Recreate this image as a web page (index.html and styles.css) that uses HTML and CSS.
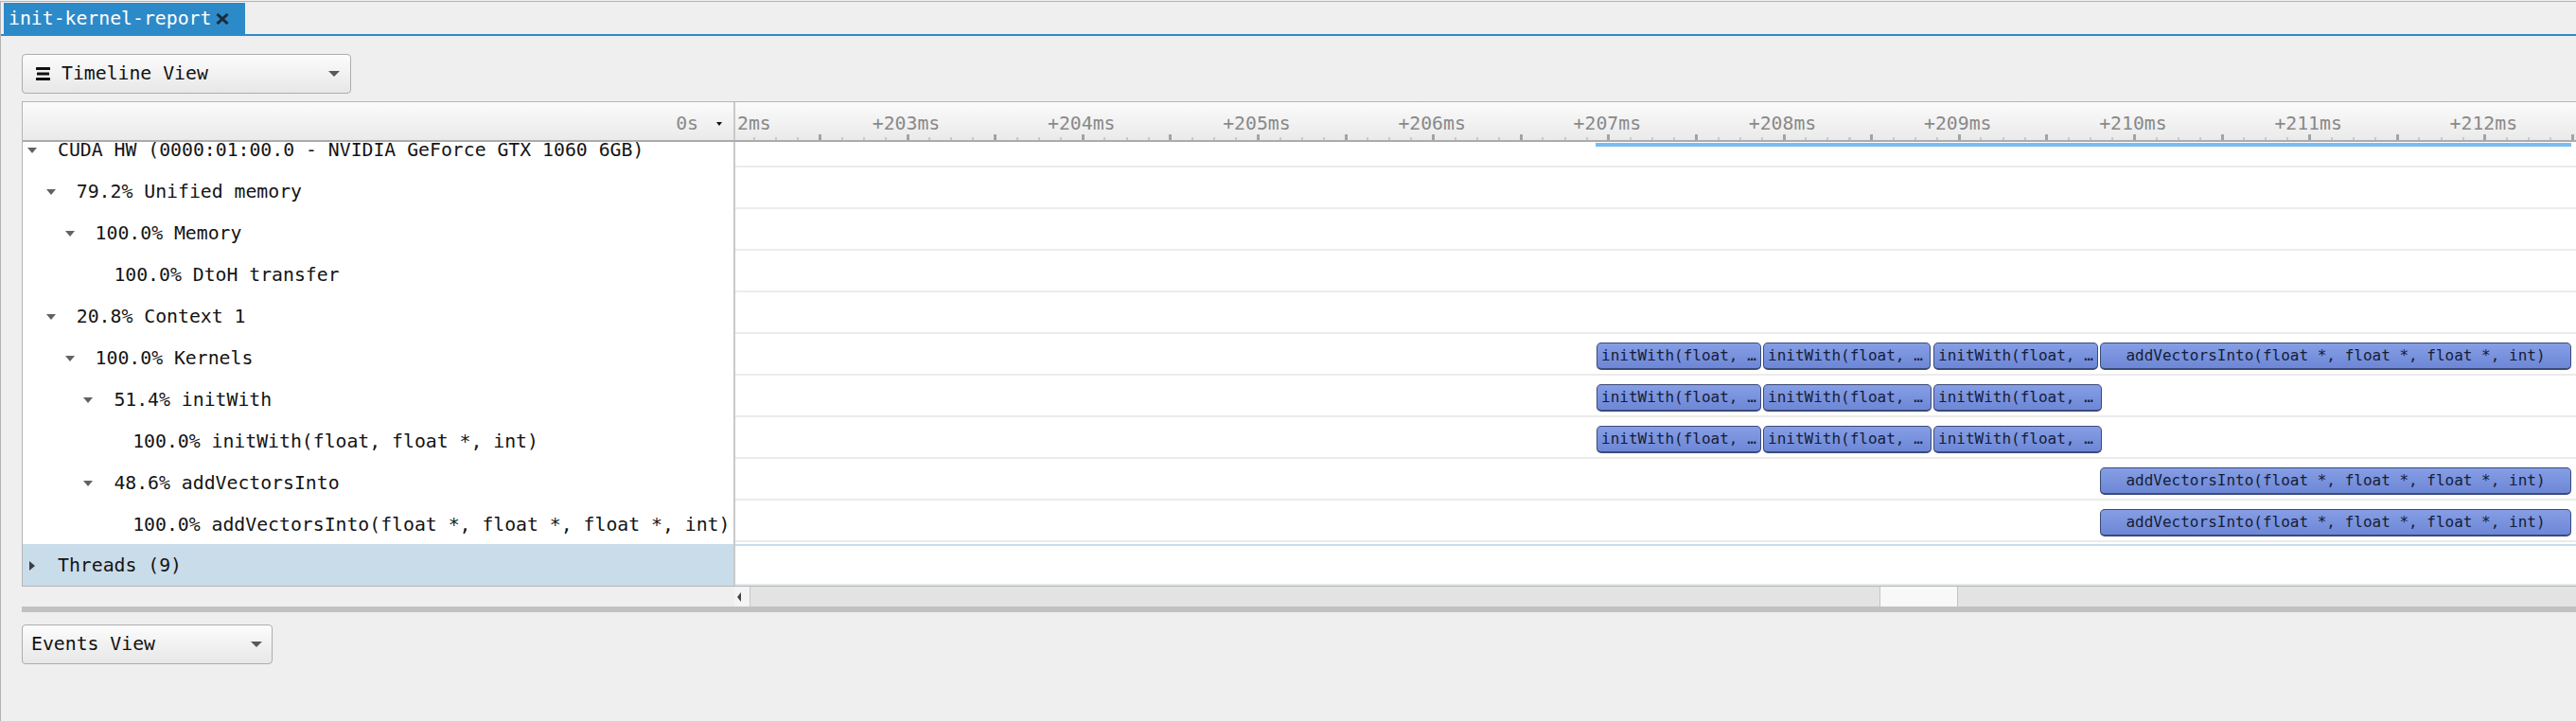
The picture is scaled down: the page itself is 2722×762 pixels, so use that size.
FILE: index.html
```html
<!DOCTYPE html>
<html>
<head>
<meta charset="utf-8">
<title>init-kernel-report</title>
<link rel="stylesheet" href="styles.css">
</head>
<body>
<div class="window">
  <div class="tabbar">
    <div class="tab">
      <span class="tab-title">init-kernel-report</span>
      <svg class="tab-close" width="14" height="12" viewBox="0 0 14 12"><path d="M1.5 1 L12.5 11 M12.5 1 L1.5 11" stroke="#1b2a39" stroke-width="3" fill="none"/></svg>
    </div>
  </div>
  <div class="content">
    <div class="combo combo-timeline">
      <svg class="combo-icon" width="15" height="14" viewBox="0 0 15 14"><rect x="0" y="0" width="15" height="3" rx="0.5" fill="#111"/><rect x="1" y="5.5" width="13" height="3" rx="0.5" fill="#111"/><rect x="0" y="11" width="15" height="3" rx="0.5" fill="#111"/></svg>
      <span class="combo-label">Timeline View</span>
      <span class="combo-arrow"></span>
    </div>

    <div class="panel">
      <div class="row header">
        <div class="tree-cell header-tree"><span class="zero">0s</span><span class="hdr-arrow"></span></div>
        <div class="tl-cell ruler">
          <span class="ticks ticks-minor"></span>
          <span class="ticks ticks-major"></span>
          <span class="tick-label" style="left:2px">2ms</span>
          <span class="tick-label" style="left:144.8px">+203ms</span>
          <span class="tick-label" style="left:330px">+204ms</span>
          <span class="tick-label" style="left:515.2px">+205ms</span>
          <span class="tick-label" style="left:700.4px">+206ms</span>
          <span class="tick-label" style="left:885.6px">+207ms</span>
          <span class="tick-label" style="left:1070.8px">+208ms</span>
          <span class="tick-label" style="left:1256px">+209ms</span>
          <span class="tick-label" style="left:1441.2px">+210ms</span>
          <span class="tick-label" style="left:1626.4px">+211ms</span>
          <span class="tick-label" style="left:1811.6px">+212ms</span>
        </div>
      </div>

      <div class="viewport">
        <div class="rows">
          <div class="row">
            <div class="tree-cell lvl0"><span class="twisty open"></span><span class="name">CUDA HW (0000:01:00.0 - NVIDIA GeForce GTX 1060 6GB)</span></div>
            <div class="tl-cell"><span class="hw-line" style="left:909px;width:1031px"></span></div>
          </div>
          <div class="row">
            <div class="tree-cell lvl1"><span class="twisty open"></span><span class="name">79.2% Unified memory</span></div>
            <div class="tl-cell"></div>
          </div>
          <div class="row">
            <div class="tree-cell lvl2"><span class="twisty open"></span><span class="name">100.0% Memory</span></div>
            <div class="tl-cell"></div>
          </div>
          <div class="row">
            <div class="tree-cell lvl3"><span class="twisty"></span><span class="name">100.0% DtoH transfer</span></div>
            <div class="tl-cell"></div>
          </div>
          <div class="row">
            <div class="tree-cell lvl1"><span class="twisty open"></span><span class="name">20.8% Context 1</span></div>
            <div class="tl-cell"></div>
          </div>
          <div class="row">
            <div class="tree-cell lvl2"><span class="twisty open"></span><span class="name">100.0% Kernels</span></div>
            <div class="tl-cell">
              <span class="bar" style="left:910px;width:174px">initWith(float, …</span>
              <span class="bar" style="left:1086px;width:177px">initWith(float, …</span>
              <span class="bar" style="left:1266px;width:174px">initWith(float, …</span>
              <span class="bar bar-center" style="left:1442px;width:498px">addVectorsInto(float *, float *, float *, int)</span>
            </div>
          </div>
          <div class="row">
            <div class="tree-cell lvl3"><span class="twisty open"></span><span class="name">51.4% initWith</span></div>
            <div class="tl-cell">
              <span class="bar" style="left:910px;width:174px">initWith(float, …</span>
              <span class="bar" style="left:1086px;width:178px">initWith(float, …</span>
              <span class="bar" style="left:1266px;width:178px">initWith(float, …</span>
            </div>
          </div>
          <div class="row">
            <div class="tree-cell lvl4"><span class="twisty"></span><span class="name">100.0% initWith(float, float *, int)</span></div>
            <div class="tl-cell">
              <span class="bar" style="left:910px;width:174px">initWith(float, …</span>
              <span class="bar" style="left:1086px;width:178px">initWith(float, …</span>
              <span class="bar" style="left:1266px;width:178px">initWith(float, …</span>
            </div>
          </div>
          <div class="row">
            <div class="tree-cell lvl3"><span class="twisty open"></span><span class="name">48.6% addVectorsInto</span></div>
            <div class="tl-cell">
              <span class="bar bar-center" style="left:1442px;width:498px">addVectorsInto(float *, float *, float *, int)</span>
            </div>
          </div>
          <div class="row">
            <div class="tree-cell lvl4"><span class="twisty"></span><span class="name">100.0% addVectorsInto(float *, float *, float *, int)</span></div>
            <div class="tl-cell">
              <span class="bar bar-center" style="left:1442px;width:498px">addVectorsInto(float *, float *, float *, int)</span>
            </div>
          </div>
        </div>
        <div class="row row-gap">
          <div class="tree-cell"></div>
          <div class="tl-cell"></div>
        </div>
        <div class="row threads">
          <div class="tree-cell lvl0"><span class="twisty closed"></span><span class="name">Threads (9)</span></div>
          <div class="tl-cell"></div>
        </div>
      </div>
    </div>

    <div class="hscroll">
      <div class="hs-spacer"></div>
      <div class="hs-btn"><span class="hs-arrow"></span></div>
      <div class="hs-track"><div class="hs-thumb"></div></div>
    </div>
    <div class="splitter"></div>

    <div class="combo combo-events">
      <span class="combo-label">Events View</span>
      <span class="combo-arrow"></span>
    </div>
  </div>
</div>
</body>
</html>
```

FILE: styles.css
```css
* { box-sizing: border-box; }
html, body { margin: 0; padding: 0; }
body {
  width: 2722px;
  height: 762px;
  overflow: hidden;
  background: #efefef;
  font-family: "DejaVu Sans Mono", "Liberation Mono", monospace;
  font-size: 19.8px;
  color: #141414;
}
.window {
  margin-top: 1px;
  height: 761px;
  border-top: 1px solid #b3b3b3;
  border-left: 1px solid #b3b3b3;
}

/* tab bar */
.tabbar {
  height: 36px;
  padding-top: 1px;
  padding-left: 3px;
  border-bottom: 2px solid #2d8ac8;
  display: flex;
}
.tab {
  width: 255px;
  height: 33px;
  background: #2d8ac8;
  color: #ffffff;
  display: flex;
  align-items: center;
  padding-left: 5px;
}
.tab-title { line-height: 24px; }
.tab-close { margin-left: 5px; margin-top: 1px; }

.content { padding-left: 22px; }

/* combo boxes */
.combo {
  display: flex;
  align-items: center;
  height: 42px;
  border: 1px solid #adadad;
  border-radius: 4px;
  background: linear-gradient(#fcfcfc, #e7e7e7);
  color: #111;
}
.combo-label { flex: 1; line-height: 24px; }
.combo-arrow {
  width: 0; height: 0;
  border-left: 6px solid transparent;
  border-right: 6px solid transparent;
  border-top: 6px solid #595959;
}
.combo-timeline {
  width: 348px;
  margin-top: 19px;
  padding: 0 11px 0 14px;
}
.combo-timeline .combo-label { margin-left: 12px; }
.combo-events {
  width: 265px;
  margin-top: 13px;
  padding: 0 10px 0 9px;
}

/* panel */
.panel {
  margin-top: 8px;
  border-top: 1px solid #b5b5b5;
  border-left: 1px solid #b5b5b5;
  border-bottom: 1px solid #b5b5b5;
  background: #ffffff;
}
.row { display: flex; height: 44px; }
.tree-cell {
  flex: 0 0 753px;
  border-right: 2px solid #c9c9c9;
  display: flex;
  align-items: center;
  padding-top: 8px;
  white-space: nowrap;
  overflow: hidden;
  background: #ffffff;
}
.tl-cell {
  flex: 1;
  position: relative;
  border-bottom: 2px solid #ebebeb;
  background: #ffffff;
}
.name { line-height: 24px; }

.lvl0 { padding-left: 5px; }
.lvl1 { padding-left: 24.8px; }
.lvl2 { padding-left: 44.6px; }
.lvl3 { padding-left: 64.4px; }
.lvl4 { padding-left: 84.2px; }

.twisty {
  flex: 0 0 10px;
  height: 10px;
  margin-right: 22px;
  display: flex;
  align-items: center;
  justify-content: center;
}
.twisty.open::before {
  content: "";
  width: 0; height: 0;
  border-left: 5px solid transparent;
  border-right: 5px solid transparent;
  border-top: 6px solid #626262;
}
.twisty.closed::before {
  content: "";
  width: 0; height: 0;
  border-top: 5px solid transparent;
  border-bottom: 5px solid transparent;
  border-left: 6px solid #3d3d3d;
}

/* header */
.header {
  height: 42px;
  border-bottom: 2px solid #ababab;
}
.header .tree-cell,
.header .tl-cell {
  background: linear-gradient(#fbfbfb, #eaeaea);
  border-bottom: 0;
}
.header-tree {
  justify-content: flex-end;
  align-items: flex-start;
  padding-top: 10.5px;
  padding-right: 12px;
}
.zero { color: #8a8a8a; line-height: 24px; }
.hdr-arrow {
  width: 0; height: 0;
  margin-left: 19px;
  margin-top: 10px;
  border-left: 3.5px solid transparent;
  border-right: 3.5px solid transparent;
  border-top: 4px solid #111;
}
.ruler { overflow: hidden; }
.tick-label {
  position: absolute;
  top: 10.5px;
  line-height: 24px;
  color: #898989;
  white-space: nowrap;
}
.ticks {
  position: absolute;
  right: 0;
  bottom: 0;
}
.ticks-minor {
  left: 18.5px;
  height: 3px;
  background: repeating-linear-gradient(to right, #c9c9c9 0 2px, transparent 2px 23.15px);
}
.ticks-major {
  left: 87.5px;
  height: 6px;
  background: repeating-linear-gradient(to right, #a3a3a3 0 3px, transparent 3px 92.6px);
}

/* scrolled rows */
.viewport { height: 469px; overflow: hidden; }
.rows { margin-top: -17px; }
.row-gap { height: 2px; }
.row-gap .tl-cell { border-bottom: 0; }
.row-gap .tree-cell { padding-top: 0; }
.threads .tree-cell { background: #c9dcea; padding-top: 2px; }
.threads .tl-cell {
  border-top: 2px solid #c9dcea;
  border-bottom: 2px solid #e1e8ee;
}

.hw-line {
  position: absolute;
  top: 18px;
  height: 4px;
  background: #79bdf0;
}
.bar {
  position: absolute;
  top: 9px;
  height: 29px;
  border: 1px solid #3a4a7a;
  border-bottom-width: 2px;
  border-radius: 5px;
  background: linear-gradient(#859ee5, #6e87d6);
  color: #151d38;
  font-size: 16px;
  line-height: 22px;
  padding-top: 2px;
  padding-left: 4px;
  white-space: nowrap;
  overflow: hidden;
}
.bar-center { text-align: center; padding-left: 0; }

/* horizontal scrollbar */
.hscroll { display: flex; height: 21px; }
.hs-spacer { flex: 0 0 753px; }
.hs-btn {
  flex: 0 0 17px;
  background: #f4f4f4;
  border-right: 1px solid #c9c9c9;
  display: flex;
  align-items: center;
  padding-left: 3px;
}
.hs-arrow {
  width: 0; height: 0;
  border-top: 5px solid transparent;
  border-bottom: 5px solid transparent;
  border-right: 4px solid #444;
}
.hs-track { flex: 1; background: #e3e3e3; display: flex; }
.hs-thumb {
  margin-left: 1193px;
  width: 83px;
  background: #f8f8f8;
  border-left: 1px solid #c4c4c4;
  border-right: 1px solid #c4c4c4;
}
.splitter { height: 6px; background: #c1c1c1; }
```
